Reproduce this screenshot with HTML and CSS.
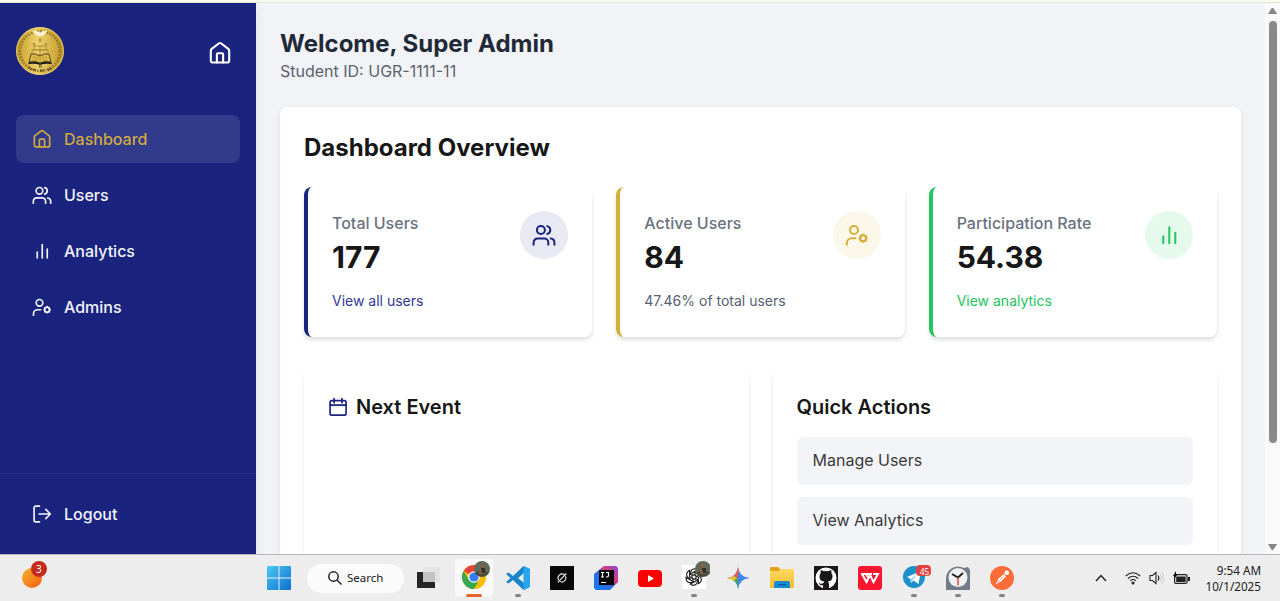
FILE: index.html
```html
<!DOCTYPE html>
<html lang="en">
<head>
<meta charset="utf-8">
<title>Dashboard</title>
<link rel="stylesheet" href="styles.css">
</head>
<body>
<svg class="defs" width="0" height="0">
  <defs>
    <symbol id="home" viewBox="0 0 24 24"><path d="M2.8 9.8c0-.8.3-1.4.9-1.900l7-5.4c.8-.6 1.800-.6 2.600 0l7 5.4c.6.5.9 1.100.9 1.900v9.600c0 1.200-.9 2.100-2.100 2.100H4.900c-1.200 0-2.100-.9-2.100-2.100z"/><path d="M8.900 21.500v-8.300c0-.6.4-1 1-1h4.200c.6 0 1 .4 1 1v8.300"/></symbol>
    <symbol id="users" viewBox="0 0 24 24"><circle cx="8.900" cy="7" r="4"/><path d="M1.600 21.800v-2.300a4 4 0 0 1 4-4h6.700a4 4 0 0 1 4 4v2.300M15.200 3.100a4 4 0 0 1 0 7.800M18.800 15.600a4 4 0 0 1 3.600 4v2.200"/></symbol>
    <symbol id="bars" viewBox="0 0 24 24"><path d="M6.300 20.300v-7M12.300 20.300V4.300M18.300 20.300V9.800"/></symbol>
    <symbol id="admin" viewBox="0 0 24 24"><circle cx="9" cy="7" r="4"/><path d="M1.800 21.800v-1.600a5 5 0 0 1 5-4.900h3.600"/><circle cx="18.100" cy="15.300" r="3"/><path d="M18.100 11.600v.7M18.100 18.300v.7M14.400 15.300h.7M21.100 15.300h.7M15.500 12.700l.5.500M20.200 17.400l.5.500M15.500 17.900l.5-.5M20.200 13.200l.5-.5"/></symbol>
    <symbol id="calendar" viewBox="0 0 24 24"><rect x="2.500" y="4.300" width="19.200" height="17.500" rx="2"/><path d="M2.500 9.800h19.200M7.300 1.800v5M16.800 1.800v5"/></symbol>
    <symbol id="logout" viewBox="0 0 24 24"><path d="M9 2.500H4.500a2 2 0 0 0-2 2v15a2 2 0 0 0 2 2H9M8.500 12H22M16.500 6.500 22 12l-5.500 5.500"/></symbol>
    <linearGradient id="gold" x2="1"><stop stop-color="#b48d22"/><stop offset=".4" stop-color="#e9cf65"/><stop offset="1" stop-color="#b48a22"/></linearGradient>
    <linearGradient id="goldface" x2="1"><stop stop-color="#cfa735"/><stop offset=".45" stop-color="#ecd270"/><stop offset="1" stop-color="#c9a030"/></linearGradient>
    <linearGradient id="win" x2="1" y2="1"><stop stop-color="#4cc9f5"/><stop offset="1" stop-color="#0a6fd0"/></linearGradient>
    <linearGradient id="orb" x2="1" y2="1"><stop stop-color="#eeb52d"/><stop offset="1" stop-color="#fb5c10"/></linearGradient>
    <linearGradient id="idea" x1="0" y1="1" x2="1" y2="0"><stop stop-color="#087cfa"/><stop offset=".5" stop-color="#3768e0"/><stop offset=".65" stop-color="#d83a78"/><stop offset="1" stop-color="#8a4bd8"/></linearGradient>
    <linearGradient id="folder" x2="0" y2="1"><stop stop-color="#ffd965"/><stop offset="1" stop-color="#f8bd2e"/></linearGradient>
    <symbol id="avatar" viewBox="0 0 16 16"><circle cx="8" cy="8" r="8" fill="#61695a"/><path d="M1 12Q8 7 15 12Q8 19 1 12" fill="#444b35"/><path d="M7 2h2v4l2 3v4H5V9l2-3z" fill="#875d43"/><path d="M7 7h4v5H8z" fill="#29332c"/></symbol>
  </defs>
</svg>
<div class="topline"></div>
<div class="window">
  <aside class="sidebar">
    <div class="brand">
      <svg class="crest" viewBox="0 0 48 48">
        <circle cx="24" cy="24" r="24" fill="url(#gold)"/>
        <circle cx="24" cy="24" r="23.300" fill="none" stroke="#e8cf73"/>
        <circle cx="24" cy="24" r="19.500" fill="url(#goldface)"/>
        <circle cx="24" cy="24" r="19.800" fill="none" stroke="#8f7428" stroke-width="2.600" stroke-dasharray="2 1.200" opacity=".75"/>
        <path d="M17 4q4-1 7 2 3-3 7-2-2 5-7 5-5 0-7-5" fill="#fff5d6"/>
        <path d="M24 11v5M22 13h4M18 16v3M30 16v3M16.500 17h3M28.500 17h3M18 19h12v4H18zM16 23h16v5H16zM24 19v9" fill="none" stroke="#a38127" stroke-width=".8"/>
        <path d="M15 27q5-1 9 2 4-3 9-2l2 8q-7-1-11 1-4-2-11-1z" fill="#dcba4b" stroke="#463815" stroke-width=".9"/>
        <path d="M13 35q7-1 11 1 4-2 11-1l1 2q-8-1-12 1-4-2-12-1z" fill="#211d12"/>
        <path d="M24 29v8M17 30l5 1M26 31l5-1M16.500 33l5 .5M26.500 33.500l5-.5" stroke="#a0802c" stroke-width=".6"/>
        <path d="M12.500 40l3 2.500M17 42.500l3 1M24 43.500h4M32 43l4-2M23 39.500h3" stroke="#59451a" stroke-width="2" stroke-dasharray="1.500 .7"/>
      </svg>
      <svg class="icon icon-lg"><use href="#home"/></svg>
    </div>
    <nav class="nav">
      <a class="nav-item active"><svg class="icon"><use href="#home"/></svg>Dashboard</a>
      <a class="nav-item"><svg class="icon"><use href="#users"/></svg>Users</a>
      <a class="nav-item"><svg class="icon"><use href="#bars"/></svg>Analytics</a>
      <a class="nav-item"><svg class="icon"><use href="#admin"/></svg>Admins</a>
    </nav>
    <div class="signout"><a class="nav-item"><svg class="icon"><use href="#logout"/></svg>Logout</a></div>
  </aside>
  <main class="main">
    <h1 class="welcome">Welcome, Super Admin</h1>
    <p class="student">Student ID: UGR-1111-11</p>
    <section class="overview">
      <h2 class="title">Dashboard Overview</h2>
      <div class="stats">
        <article class="stat navy">
          <div><p class="label">Total Users</p><p class="value">177</p><p class="note">View all users</p></div>
          <span class="bubble"><svg class="icon icon-lg"><use href="#users"/></svg></span>
        </article>
        <article class="stat amber">
          <div><p class="label">Active Users</p><p class="value">84</p><p class="note">47.46% of total users</p></div>
          <span class="bubble"><svg class="icon icon-lg"><use href="#admin"/></svg></span>
        </article>
        <article class="stat green">
          <div><p class="label">Participation Rate</p><p class="value">54.38</p><p class="note">View analytics</p></div>
          <span class="bubble"><svg class="icon icon-lg"><use href="#bars"/></svg></span>
        </article>
      </div>
      <div class="panels">
        <article class="panel"><h3 class="subtitle"><svg class="icon"><use href="#calendar"/></svg>Next Event</h3></article>
        <article class="panel">
          <h3 class="subtitle">Quick Actions</h3>
          <div class="actions"><a class="action">Manage Users</a><a class="action">View Analytics</a></div>
        </article>
      </div>
    </section>
  </main>
  <div class="scrollbar">
    <svg width="11" height="8" viewBox="0 0 11 8"><path d="M.8 7h9.400L6.300 1.300q-.8-1-1.600 0z" fill="#868686"/></svg>
    <span class="thumb"></span>
    <svg class="down" width="11" height="8" viewBox="0 0 11 8"><path d="M.8 1h9.400L6.300 6.700q-.8 1-1.600 0z" fill="#868686"/></svg>
  </div>
</div>
<footer class="taskbar">
  <div class="widget"><svg width="28" height="30" viewBox="0 0 28 30"><circle cx="12" cy="18" r="10" fill="url(#orb)"/><circle cx="19" cy="9" r="8" fill="#c42b1c"/></svg><span class="count">3</span></div>
  <div class="apps">
    <span class="app"><svg width="24" height="24" viewBox="0 0 24 24"><path d="M0 1q0-1 1-1h10.500v11.500H0zM12.500 0H23q1 0 1 1v10.500H12.500zM0 12.500h11.500V24H1q-1 0-1-1zM12.500 12.500H24V23q0 1-1 1H12.500z" fill="url(#win)"/></svg></span>
    <span class="search"><svg width="14" height="14" viewBox="0 0 14 14" fill="none" stroke="#222" stroke-width="1.500"><circle cx="5.500" cy="5.500" r="4.700"/><path d="M9 9l4.500 4.500"/></svg>Search</span>
    <span class="app taskview"><svg width="24" height="24" viewBox="0 0 24 24"><path d="M0 6h18v16H0z" fill="#252525"/><path d="M6 1h17v15H6z" fill="#e3e3e3"/><path d="M6 6h12v10H6z" fill="#c3c3c3"/></svg></span>
    <span class="app"><span class="tile"></span><svg class="over" width="30" height="30" viewBox="0 0 30 30"><circle cx="14" cy="16" r="12" fill="#fbbc05"/><path d="M14 16 3.600 10A12 12 0 0 1 24.400 10z" fill="#ea4335"/><path d="M3.600 10A12 12 0 0 0 14 28l5.200-9H8.800z" fill="#34a853"/><path d="M24.400 10H14l5.200 9L14 28A12 12 0 0 0 24.400 10" fill="#fbbc05"/><circle cx="14" cy="16" r="5.800" fill="#fff"/><circle cx="14" cy="16" r="4.600" fill="#347cf0"/><use href="#avatar" x="14" y="0" width="16" height="16"/></svg><i class="mark current"></i></span>
    <span class="app"><svg width="24" height="24" viewBox="0 0 24 24"><path d="M17.500 0 24 3v18l-6.500 3L7 14l-4.500 3.500L0 16l4.500-4L0 8l2.500-1.500L7 10zM18 7l-6 5 6 5z" fill="#1785c9" fill-rule="evenodd"/><path d="M17.500 0 24 3v18l-6.500 3z" fill="#2aa3ed"/></svg><i class="mark"></i></span>
    <span class="app"><svg width="24" height="24" viewBox="0 0 24 24"><path fill="#080808" d="M0 0h24v24H0z"/><path d="M14.300 8.700A4 4 0 0 0 8.600 14M7.800 16.300l8.600-8.800M9.800 15.400A4 4 0 0 0 15.500 10.300" fill="none" stroke="#e8e8e8" stroke-width="1.100"/></svg></span>
    <span class="app"><svg width="24" height="24" viewBox="0 0 24 24"><path d="M0 8 10 0h12l2 2v14l-8 8H2l-2-2z" fill="url(#idea)"/><path d="M5 4h15v15H5z" fill="#050505"/><path d="M7 6.500h3M8.500 6.500v4.500M7 11h3M12 6.500h2.500v3q0 1.500-1.500 1.500h-1M7 16.500h5" fill="none" stroke="#fff" stroke-width="1.200"/></svg></span>
    <span class="app"><svg width="24" height="17" viewBox="0 0 24 17"><rect width="24" height="17" rx="4" fill="#f00"/><path d="M10 5v7l6-3.500z" fill="#fff"/></svg></span>
    <span class="app"><svg class="over" width="30" height="30" viewBox="0 0 30 30"><path fill="#fff" d="M2 4h24v24H2z"/><g fill="none" stroke="#161616" stroke-width="1.100" transform="translate(14 16)"><g id="petal"><path d="M-3.400-2v-2.500a4 4 0 0 1 6-3.200l1 .6-5.600 3.200V1"/></g><use href="#petal" transform="rotate(60)"/><use href="#petal" transform="rotate(120)"/><use href="#petal" transform="rotate(180)"/><use href="#petal" transform="rotate(240)"/><use href="#petal" transform="rotate(300)"/></g><use href="#avatar" x="15" y="0" width="16" height="16"/></svg><i class="mark"></i></span>
    <span class="app"><svg width="24" height="24" viewBox="0 0 24 24"><path d="M12 1q1 10 11 11-10 1-11 11Q11 13 1 12 11 11 12 1" fill="#4285f4"/><path d="M12 1q1 7 5 9l-5 2-5-2q4-2 5-9" fill="#e65b55"/><path d="M1 12q4-.5 7-2l4 3-4 2q-3-2-7-3" fill="#f2bd22"/><path d="M8 14l4-2v11q-.5-6-4-9" fill="#36a95b"/><path d="M12 6l5 4q2 1.500 6 2-10 1-11 11z" fill="#4285f4"/></svg></span>
    <span class="app"><svg width="24" height="24" viewBox="0 0 24 24"><path d="M0 2q0-1 1-1h7l2 2v5H0z" fill="#e5a119"/><path d="M0 5h9l2-2h12q1 0 1 1v18H0z" fill="url(#folder)"/><path d="M4 22v-5q0-2 2-2h12q2 0 2 2v5z" fill="#168bd2"/><path d="M8 18h8v1.500H8z" fill="#0b5c9e"/></svg></span>
    <span class="app"><svg width="24" height="24" viewBox="0 0 24 24"><path fill="#191717" d="M0 0h24v24H0z"/><circle cx="12" cy="12" r="10.500" fill="#fff"/><path d="M9 23v-4q-3 1-4.500-2 3 1.500 5 0 .2-1 .8-1.500Q5 15 5.500 10q0-1.500 1.200-2.800-.4-1.500.1-3 1.800.1 3.100 1.100 2.200-.5 4.300 0 1.300-1 3-1.100.6 1.500.2 3Q18.500 8.500 18.500 10q.4 5-4.700 5.500 1.200 1 1.200 3V23z" fill="#191717"/></svg></span>
    <span class="app"><svg width="24" height="24" viewBox="0 0 24 24"><rect width="24" height="24" rx="3" fill="#fb1630"/><path d="M3 8h11M4 8l4.500 8L12 9l3.500 7L20 8h-5M8 8l3 5" fill="none" stroke="#fff" stroke-width="2"/></svg></span>
    <span class="app"><svg class="over" width="31" height="30" viewBox="0 0 31 30"><circle cx="14" cy="16" r="11" fill="#1b91cc"/><path d="M7 16l14-6-2.500 13-5-3.500-2.500 2.500-.5-4z" fill="#fff"/><path d="M10.500 18l7-5-5 6-1.500 3z" fill="#9bcde9"/><rect x="16" y="4" width="15" height="11" rx="4" fill="#e34242"/></svg><b class="unread">45</b><i class="mark"></i></span>
    <span class="app"><svg width="25" height="24" viewBox="0 0 25 24"><path d="M0 12A12 12 0 0 1 18 2l4-1 2 3v20H0z" fill="#717c86"/><circle cx="12" cy="11.500" r="9.500" fill="#f1f2f3"/><path d="M6 8l6 3.500L17 7" fill="none" stroke="#222" stroke-width="2"/><path d="M12 11.500v8" stroke="#dc5640" stroke-width="1.600"/></svg><i class="mark"></i></span>
    <span class="app"><svg width="24" height="24" viewBox="0 0 24 24"><circle cx="12" cy="12" r="12" fill="#ff6c37"/><circle cx="16.800" cy="6.800" r="2.300" fill="#fff"/><path d="M5.500 18.500l3-6L14 8l2 2.500-5 5z" fill="#fff"/><path d="M7 17l7-7" stroke="#ff6c37" stroke-width=".6"/></svg><i class="mark"></i></span>
  </div>
  <div class="tray">
    <svg width="12" height="8" viewBox="0 0 12 8" fill="none" stroke="#222" stroke-width="1.400"><path d="M1 7l5-5.500L11 7"/></svg>
    <svg class="wifi" width="16" height="14" viewBox="0 0 16 14" fill="none" stroke="#222" stroke-width="1.100"><path d="M.8 5Q8-1.500 15.200 5M3 7.500q5-4.500 10 0M5.200 9.700q2.800-2.300 5.600 0"/><circle cx="8" cy="12" r="1" fill="#222"/></svg>
    <svg class="sound" width="16" height="14" viewBox="0 0 16 14" fill="none" stroke="#222" stroke-width="1.100"><path d="M1 4.500h2.500L7 1.500v11L3.500 9.500H1zM9 4.500q1.800 2.500 0 5"/><path d="M11 3q2.500 4 0 8M13 1.500q3.500 5.500 0 11" stroke="#d0d0d0"/></svg>
    <svg class="battery" width="17" height="14" viewBox="0 0 17 14"><rect x="1.600" y="3.600" width="12.500" height="8.800" rx="1.500" fill="none" stroke="#222" stroke-width="1.200"/><path d="M3.200 5.500h9.500v5.500h-9.500zM15 6h2v4h-2z" fill="#222"/><path d="M3 0 0 5h2L1 8l4-5H3z" fill="#111"/></svg>
    <div class="clock"><span>9:54 AM</span><span>10/1/2025</span></div>
  </div>
</footer>
</body>
</html>
```
FILE: styles.css
```css
* { box-sizing: border-box; }
body { margin: 0; width: 1280px; height: 601px; overflow: hidden; display: flex; flex-direction: column; background: #f1f3f6; color: #171717; font-family: Inter, "Liberation Sans", sans-serif; font-size: 16px; line-height: 24px; }
h1, h2, h3, p { margin: 0; }
svg { display: block; flex-shrink: 0; }
.defs { position: absolute; }
.topline { height: 3px; flex-shrink: 0; background: #f8fced; border-bottom: 1px solid #dfe3d8; }
.window { height: 551px; display: flex; overflow: hidden; }
.icon { width: 20px; height: 20px; fill: none; stroke: currentColor; stroke-width: 2; stroke-linecap: round; stroke-linejoin: round; }
.icon-lg { width: 24px; height: 24px; }
.sidebar { width: 256px; flex-shrink: 0; display: flex; flex-direction: column; background: #1a237e; color: #f3f4fb; box-shadow: 0 8px 12px rgba(0,0,0,.08); }
.brand { display: flex; align-items: center; justify-content: space-between; padding: 24px 24px 24px 16px; color: #fff; }
.brand .icon { margin-top: 4px; stroke-width: 2.1; }
.crest { width: 48px; height: 48px; }
.nav { display: flex; flex-direction: column; gap: 8px; padding: 16px; }
.nav-item { height: 48px; padding: 0 16px; display: flex; align-items: center; gap: 12px; border-radius: 8px; font-weight: 450; }
.nav-item.active { background: #313a8b; color: #d0a943; }
.signout { margin-top: auto; padding: 16px; border-top: 1px solid #242d84; }
.main { flex: 1; padding: 25px 24px 0; }
.welcome { font-size: 24px; line-height: 32px; font-weight: 700; color: #1f2937; }
.student { margin-top: -1px; color: #5b6370; }
.overview { margin-top: 24px; height: 600px; padding: 25px 24px 24px; border-radius: 8px; background: #fff; box-shadow: 0 2px 6px rgba(0,0,0,.08); }
.title { font-size: 24px; line-height: 32px; font-weight: 700; margin-bottom: 23px; }
.stats { display: grid; grid-template-columns: repeat(3, 1fr); gap: 24px; }
.stat { height: 149.5px; padding: 24px; display: flex; justify-content: space-between; border-left: 4px solid; border-radius: 8px; box-shadow: 0 3px 4px rgba(0,0,0,.13); }
.label { color: #6b7280; font-weight: 500; }
.value { margin-top: 4px; color: #171717; font-size: 30px; line-height: 36px; font-weight: 700; }
.note { margin-top: 16px; font-size: 14px; line-height: 20px; }
.bubble { width: 48px; height: 48px; border-radius: 50%; display: grid; place-items: center; }
.navy { border-color: #1a237e; }
.navy .note { color: #303996; }
.navy .bubble { background: #e8e9f3; color: #1a237e; }
.amber { border-color: #d4af37; }
.amber .note { color: #566071; }
.amber .bubble { background: #fbf7e9; color: #d4af37; }
.green { border-color: #22c55e; }
.green .note { color: #22c55e; }
.green .bubble { background: #e6f9ed; color: #22c55e; }
.panels { margin-top: 32px; display: grid; grid-template-columns: 1fr 1fr; gap: 24px; }
.panel { height: 330px; padding: 24px; border-radius: 8px; box-shadow: 0 3px 4px rgba(0,0,0,.1); }
.subtitle { display: flex; align-items: center; gap: 8px; font-size: 20px; line-height: 28px; font-weight: 600; }
.subtitle .icon { color: #1a237e; }
.actions { display: flex; flex-direction: column; gap: 12px; margin-top: 16px; }
.action { height: 48px; padding: 11px 16px 13px; border-radius: 6px; background: #f3f4f8; color: #3a3a3a; }
.scrollbar { width: 15px; flex-shrink: 0; background: #fafafa; display: flex; flex-direction: column; align-items: center; padding: 4px 0 3px; }
.thumb { width: 8px; height: 422px; margin-top: 6px; border-radius: 4px; background: #8a8a8a; }
.down { margin-top: auto; }
.taskbar { height: 47px; display: flex; background: #ededed; border-top: 1px solid #b8b8b8; color: #202020; font-family: "Noto Sans", sans-serif; }
.widget { width: 257px; padding: 5px 0 0 20px; position: relative; }
.count { position: absolute; left: 36px; top: 6px; font-size: 10px; line-height: 16px; color: #fff; }
.apps { display: flex; align-items: center; height: 46px; }
.app { width: 44px; height: 46px; display: flex; align-items: center; justify-content: center; position: relative; }
.over { position: absolute; left: 8px; top: 6px; }
.tile { width: 38px; height: 38px; border-radius: 4px; background: #f9f9f9; }
.taskview { margin-left: 4px; }
.taskview svg { margin-right: 2px; }
.mark { position: absolute; left: 19px; bottom: 4px; width: 6px; height: 3px; border-radius: 2px; background: #858585; }
.current { left: 14px; width: 16px; background: #e66326; }
.unread { position: absolute; left: 28px; top: 11px; font-size: 8px; line-height: 11px; color: #fff; font-weight: 400; }
.search { width: 97px; height: 29px; margin-left: 6px; border-radius: 15px; background: #fbfbfb; display: flex; align-items: center; gap: 5px; padding-left: 21px; font-size: 11.5px; }
.tray { flex: 1; display: flex; align-items: center; padding: 0 19px 0 71px; }
.wifi { margin-left: 18px; }
.sound { margin-left: 8px; }
.battery { margin-left: 8px; }
.clock { margin-left: auto; display: flex; flex-direction: column; text-align: right; font-size: 11.7px; line-height: 16px; }
```
